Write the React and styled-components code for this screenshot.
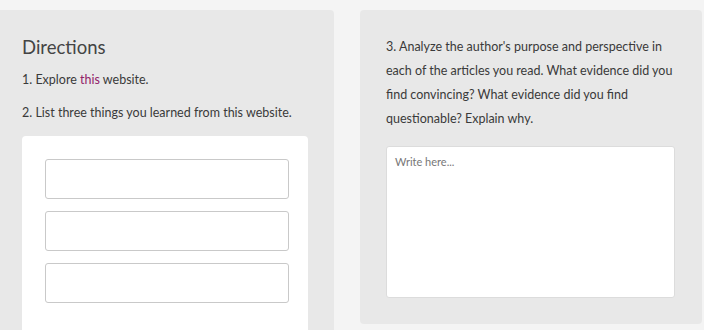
import React from "react";
import styled, { createGlobalStyle } from "styled-components";

const Global = createGlobalStyle`
  html, body { margin: 0; padding: 0; background: #f4f4f4; }
  body { font-family: "Lato", "Liberation Sans", sans-serif; color: #3a3a3a; }
  * { box-sizing: border-box; }
`;

const Page = styled.div`
  display: flex;
  align-items: flex-start;
  gap: 26px;
  padding-top: 10px;
  width: 704px;
  height: 330px;
  overflow: hidden;
`;

const Panel = styled.section`
  background: #e8e8e8;
  border-radius: ${(p) => (p.$left ? "0 4px 0 0" : "4px")};
  width: ${(p) => p.$w}px;
  padding: ${(p) => p.$pad};
  flex: none;
`;

const Heading = styled.h2`
  margin: 0 0 9px;
  font-size: 18.5px;
  font-weight: 400;
  line-height: 24px;
  color: #444;
`;

const Step = styled.p`
  margin: 0 0 9px;
  font-size: 12.5px;
  line-height: 24px;
  color: #3a3a3a;
`;

const Link = styled.a`
  color: #922268;
  text-decoration: none;
`;

const Card = styled.div`
  background: #fff;
  border-radius: 4px 4px 0 0;
  margin-top: 11px;
  padding: 23px 19px 40px 23px;
  display: flex;
  flex-direction: column;
  gap: 12px;
`;

const Field = styled.input`
  display: block;
  width: 244px;
  height: 40px;
  border: 1px solid #c9c9c9;
  border-radius: 3px;
  background: #fff;
  outline: none;
`;

const Prompt = styled.p`
  margin: 0;
  font-size: 12.5px;
  line-height: 24px;
  color: #3a3a3a;
`;

const Area = styled.textarea`
  display: block;
  margin-top: 15px;
  width: 289px;
  height: 152px;
  border: 1px solid #dcdcdc;
  border-radius: 3px;
  background: #fff;
  padding: 8px 8px;
  font-family: "Lato", "Liberation Sans", sans-serif;
  font-size: 11px;
  resize: none;
  outline: none;
  &::placeholder { color: #777; }
`;

export default function App() {
  return (
    <>
      <Global />
      <Page>
        <Panel $left $w={334} $pad="25px 26px 0 22px">
          <Heading>Directions</Heading>
          <Step>
            1. Explore <Link href="#">this</Link> website.
          </Step>
          <Step>2. List three things you learned from this website.</Step>
          <Card>
            <Field />
            <Field />
            <Field />
          </Card>
        </Panel>
        <Panel $w={342} $pad="25px 26px 26px 26px">
          <Prompt>
            3. Analyze the author's purpose and perspective in each of the
            articles you read. What evidence did you find convincing? What
            evidence did you find questionable? Explain why.
          </Prompt>
          <Area placeholder="Write here..." />
        </Panel>
      </Page>
    </>
  );
}
